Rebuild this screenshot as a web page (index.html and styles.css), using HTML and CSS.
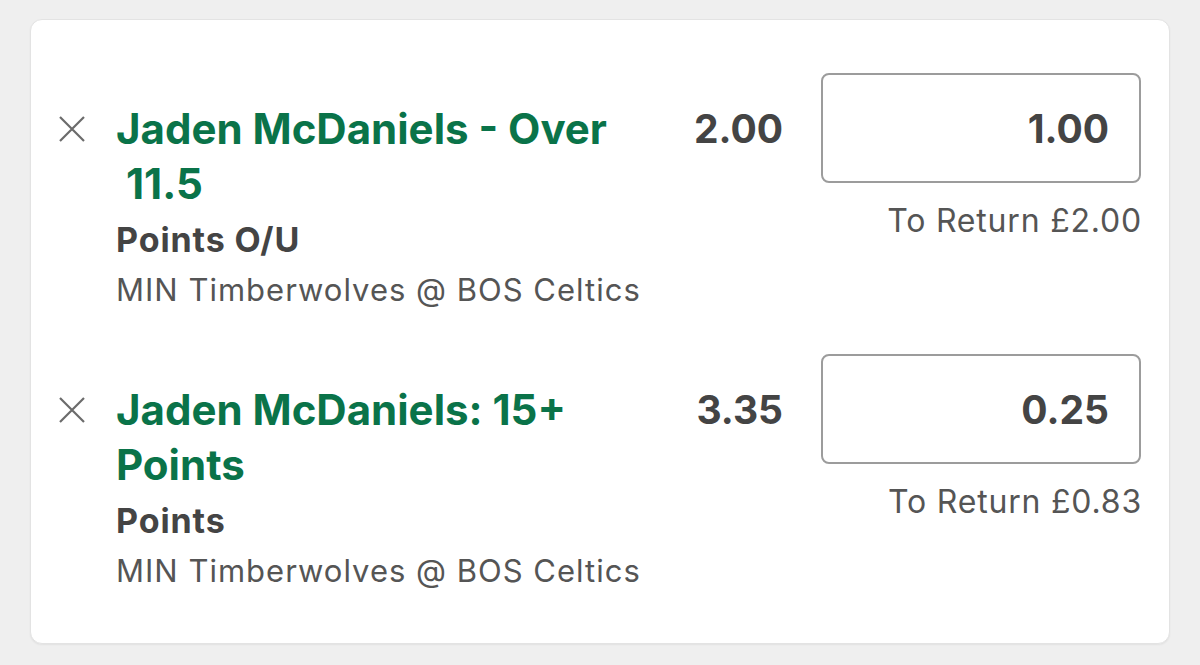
FILE: index.html
```html
<!DOCTYPE html>
<html lang="en">
<head>
<meta charset="utf-8">
<title>Bet slip</title>
<link rel="stylesheet" href="styles.css">
</head>
<body>
<div class="card">
  <div class="bet">
    <button class="remove" aria-label="Remove">
      <svg width="26" height="26" viewBox="0 0 26 26"><path d="M1 1 L25 25 M25 1 L1 25" stroke="#6b6b6b" stroke-width="2.2" fill="none"/></svg>
    </button>
    <div class="info">
      <div class="selection">Jaden McDaniels - Over &nbsp;11.5</div>
      <div class="market">Points O/U</div>
      <div class="event">MIN Timberwolves @ BOS Celtics</div>
    </div>
    <div class="odds">2.00</div>
    <div class="stake-col">
      <div class="stake">1.00</div>
      <div class="return">To Return £2.00</div>
    </div>
  </div>
  <div class="bet">
    <button class="remove" aria-label="Remove">
      <svg width="26" height="26" viewBox="0 0 26 26"><path d="M1 1 L25 25 M25 1 L1 25" stroke="#6b6b6b" stroke-width="2.2" fill="none"/></svg>
    </button>
    <div class="info">
      <div class="selection">Jaden McDaniels: 15+ Points</div>
      <div class="market">Points</div>
      <div class="event">MIN Timberwolves @ BOS Celtics</div>
    </div>
    <div class="odds">3.35</div>
    <div class="stake-col">
      <div class="stake">0.25</div>
      <div class="return">To Return £0.83</div>
    </div>
  </div>
</div>
</body>
</html>
```

FILE: styles.css
```css
* { box-sizing: border-box; }
html, body { margin: 0; padding: 0; }
body {
  background: #efefef;
  font-family: Inter, Roboto, "Liberation Sans", Arial, sans-serif;
  width: 1200px;
  height: 665px;
  overflow: hidden;
  padding: 19px 30px 0 30px;
}
.card {
  background: #fff;
  border: 1px solid #e3e3e3;
  border-radius: 12px;
  box-shadow: 0 1px 2px rgba(0,0,0,0.06);
  height: 625px;
  padding: 53px 28px 0 28px;
  display: flex;
  flex-direction: column;
  gap: 39px;
}
.bet {
  display: flex;
  align-items: flex-start;
}
.remove {
  margin: 43px 0 0 0;
  padding: 0;
  border: 0;
  background: none;
  width: 26px;
  height: 26px;
  display: flex;
}
.info {
  margin: 28px 0 0 31px;
  width: 550px;
}
.selection {
  color: #0a7349;
  font-weight: 700;
  font-size: 42px;
  line-height: 55px;
}
.market {
  color: #444;
  font-weight: 700;
  font-size: 34px;
  letter-spacing: 0.9px;
  line-height: 50px;
  margin-top: 4px;
}
.event {
  color: #555;
  font-size: 31px;
  letter-spacing: 1px;
  line-height: 50px;
}
.odds {
  margin-top: 28px;
  width: 117px;
  text-align: right;
  color: #444;
  font-weight: 700;
  font-size: 39px;
  line-height: 55px;
}
.stake-col {
  margin-left: 38px;
  width: 320px;
  display: flex;
  flex-direction: column;
  align-items: flex-end;
}
.stake {
  width: 320px;
  height: 110px;
  border: 2px solid #9c9c9c;
  border-radius: 8px;
  display: flex;
  align-items: center;
  justify-content: flex-end;
  padding-right: 30px;
  color: #444;
  font-weight: 700;
  font-size: 39px;
}
.return {
  margin-top: 18px;
  margin-right: -1px;
  color: #555;
  font-size: 32px;
  letter-spacing: 0.8px;
  line-height: 40px;
}
```
